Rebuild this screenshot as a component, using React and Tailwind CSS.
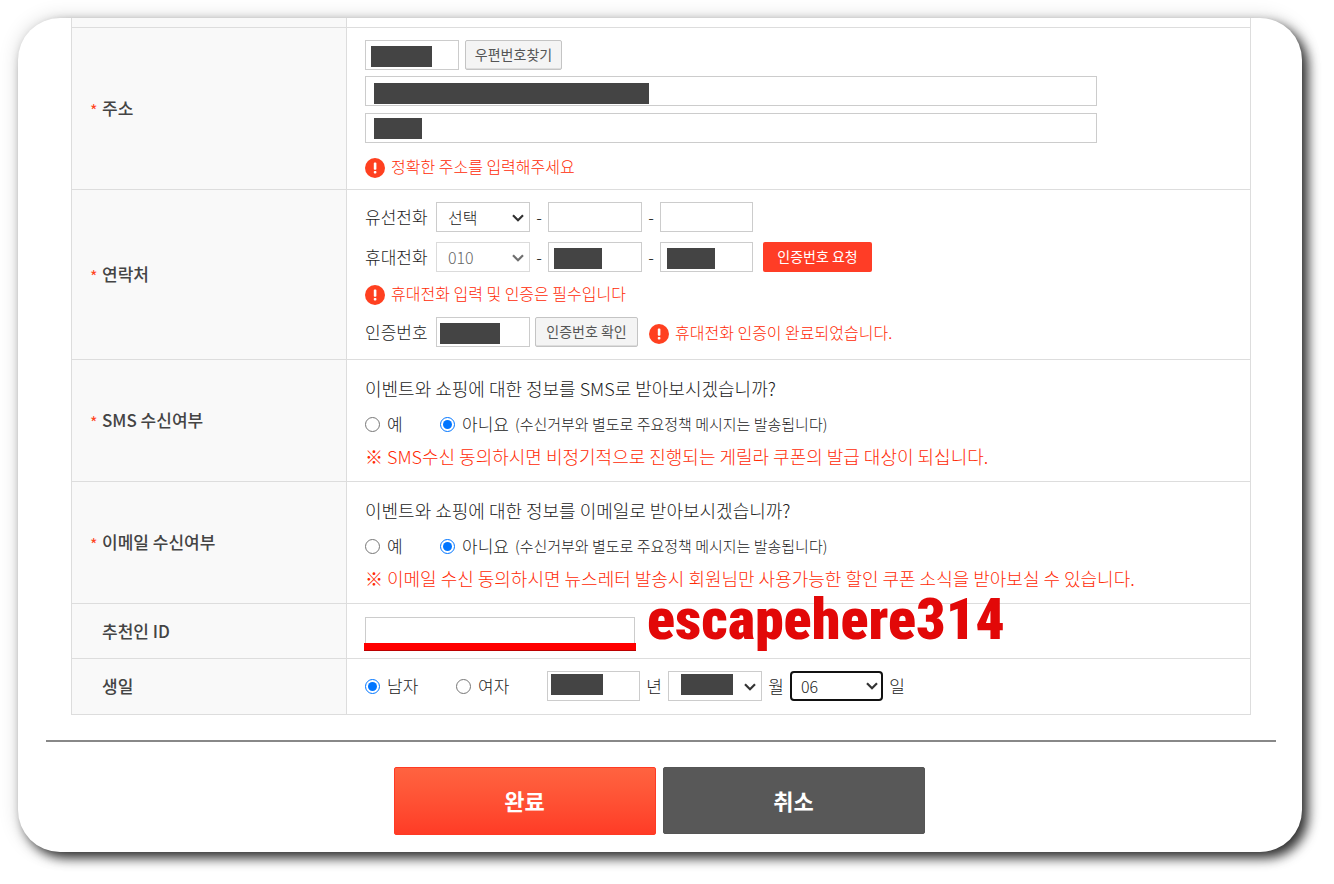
import React, { useState } from "react";

const Bar = ({ className }) => (
  <span className={`absolute h-[21px] bg-[#444] ${className}`} aria-hidden="true" />
);

const Field = ({ label, className, bar, id }) => (
  <div className={`relative h-[30px] ${className}`}>
    <input
      id={id}
      type="text"
      aria-label={label}
      className="block h-full w-full border border-[#ccc] bg-white px-2 outline-none"
    />
    {bar && <Bar className={bar} />}
  </div>
);

const Select = ({ id, label, disabled, option, className, bar }) => (
  <div className={`relative h-[30px] ${disabled ? "opacity-70" : ""} ${className}`}>
    <select
      id={id}
      aria-label={label}
      disabled={disabled}
      className="block h-full w-full appearance-none pr-6 pl-[11px] text-base text-[#222] outline-none"
    >
      <option>{option}</option>
    </select>
    <svg
      viewBox="0 0 12 8"
      className="pointer-events-none absolute top-[11px] right-[5px] h-2 w-3"
      aria-hidden="true"
    >
      <path d="M1 1.2 L6 6.2 L11 1.2" fill="none" stroke="#333" strokeWidth="2.2" />
    </svg>
    {bar && <Bar className={bar} />}
  </div>
);

const Dash = () => <span className="w-[18px] text-center">-</span>;

const AlertIcon = () => (
  <svg viewBox="0 0 20 20" className="mt-1 h-5 w-5 shrink-0" aria-hidden="true">
    <circle cx="10" cy="10" r="10" fill="#ff4020" />
    <rect x="8.8" y="4.6" width="2.6" height="7.2" rx="0.8" fill="#fff" />
    <rect x="8.8" y="13" width="2.6" height="2.6" rx="0.8" fill="#fff" />
  </svg>
);

const Alert = ({ children, className }) => (
  <p
    className={`flex h-[22px] items-center gap-1.5 text-base leading-5 text-[#ff2a05] ${className}`}
  >
    <AlertIcon />
    {children}
  </p>
);

const Row = ({ title, required, cell, children }) => (
  <tr>
    <th
      scope="row"
      className="w-[275px] border border-[#ddd] bg-[#f9f9f9] pl-[18px] text-left text-[17px] font-medium text-[#444]"
    >
      <span className="flex items-center">
        <span className="w-3 pt-1 text-base leading-5 font-normal text-[#ff4422]">
          {required && "*"}
        </span>
        {title}
      </span>
    </th>
    <td className={`border border-[#ddd] px-[18px] ${cell}`}>{children}</td>
  </tr>
);

const Radio = ({ name, label, checked, onChange, className }) => (
  <label className={`flex items-center gap-[7px] ${className}`}>
    <input
      type="radio"
      name={name}
      checked={checked}
      onChange={onChange}
      className="mt-px h-[15px] w-[15px]"
    />
    {label}
  </label>
);

const Consent = ({ name, question, note }) => {
  const [agree, setAgree] = useState(false);

  return (
    <div className="leading-6">
      <p className="text-lg leading-6">{question}</p>
      <div className="mt-3 flex items-center">
        <Radio
          name={name}
          label="예"
          checked={agree}
          onChange={() => setAgree(true)}
          className="w-[75px]"
        />
        <Radio
          name={name}
          label="아니요"
          checked={!agree}
          onChange={() => setAgree(false)}
        />
        <span className="ml-1.5 text-[15px]">
          (수신거부와 별도로 주요정책 메시지는 발송됩니다)
        </span>
      </div>
      <p className="mt-2 text-lg leading-6 text-[#ff2a05]">{note}</p>
    </div>
  );
};

const grayButton =
  "h-[30px] rounded-xs border border-[#c4c4c4] bg-[#f4f4f4] pb-0.5 text-sm font-normal text-[#555] shadow-[inset_0_-1px_0_#ddd]";

const App = () => {
  const [gender, setGender] = useState("male");

  return (
    <div className="min-h-screen bg-white pt-[18px] pr-8 pb-8 pl-[18px] font-['Noto_Sans_CJK_KR',sans-serif] text-[17px] font-light text-[#222]">
      <form
        onSubmit={(e) => e.preventDefault()}
        className="overflow-hidden rounded-[42px] bg-white pb-[17px] shadow-[6px_6px_12px_rgba(0,0,0,0.8),0_0_20px_rgba(0,0,0,0.15)]"
      >
        <div className="pr-[51px] pl-[53px]">
          <table className="w-full table-fixed border-collapse">
            <tbody>
              <tr className="h-[9px]">
                <td className="w-[275px] border border-t-0 border-[#ddd] bg-[#f9f9f9]" />
                <td className="border border-t-0 border-[#ddd]" />
              </tr>

              <Row title="주소" required cell="py-3">
                <div className="flex gap-1.5">
                  <Field
                    label="우편번호"
                    className="w-[94px]"
                    bar="left-1.5 top-1.5 w-[61px]"
                  />
                  <button type="button" className={`w-[97px] ${grayButton}`}>
                    우편번호찾기
                  </button>
                </div>
                <Field
                  label="기본 주소"
                  className="mt-1.5 max-w-[732px]"
                  bar="left-[9px] top-[7px] w-[275px]"
                />
                <Field
                  label="상세 주소"
                  className="mt-[7px] mb-3 max-w-[732px]"
                  bar="left-[9px] top-[5px] w-12"
                />
                <Alert>정확한 주소를 입력해주세요</Alert>
              </Row>

              <Row title="연락처" required cell="py-3">
                <div className="flex items-center">
                  <label htmlFor="tel" className="w-[71px]">
                    유선전화
                  </label>
                  <Select
                    id="tel"
                    option="선택"
                    className="w-[94px] border border-[#ccc]"
                  />
                  <Dash />
                  <Field label="유선전화 가운데 자리" className="w-[94px]" />
                  <Dash />
                  <Field label="유선전화 끝자리" className="w-[93px]" />
                </div>
                <div className="mt-2.5 flex items-center">
                  <label htmlFor="mobile" className="w-[71px]">
                    휴대전화
                  </label>
                  <Select
                    id="mobile"
                    disabled
                    option="010"
                    className="w-[94px] border border-[#ccc]"
                  />
                  <Dash />
                  <Field
                    label="휴대전화 가운데 자리"
                    className="w-[94px]"
                    bar="left-1.5 top-1.5 w-12"
                  />
                  <Dash />
                  <Field
                    label="휴대전화 끝자리"
                    className="w-[93px]"
                    bar="left-[7px] top-1.5 w-12"
                  />
                  <button
                    type="button"
                    className="ml-2.5 h-[30px] w-[109px] rounded-xs bg-[#ff3d26] pb-0.5 text-sm font-normal text-white"
                  >
                    인증번호 요청
                  </button>
                </div>
                <Alert className="mt-2.5 mb-[13px]">
                  휴대전화 입력 및 인증은 필수입니다
                </Alert>
                <div className="flex items-center">
                  <label htmlFor="code" className="w-[71px]">
                    인증번호
                  </label>
                  <Field
                    id="code"
                    className="w-[94px]"
                    bar="left-1 top-1.5 w-[60px]"
                  />
                  <button
                    type="button"
                    className={`mr-[11px] ml-[5px] w-[103px] ${grayButton}`}
                  >
                    인증번호 확인
                  </button>
                  <Alert>휴대전화 인증이 완료되었습니다.</Alert>
                </div>
              </Row>

              <Row title="SMS 수신여부" required cell="pt-4 pb-[13px]">
                <Consent
                  name="sms"
                  question="이벤트와 쇼핑에 대한 정보를 SMS로 받아보시겠습니까?"
                  note="※ SMS수신 동의하시면 비정기적으로 진행되는 게릴라 쿠폰의 발급 대상이 되십니다."
                />
              </Row>

              <Row title="이메일 수신여부" required cell="pt-4 pb-[13px]">
                <Consent
                  name="email"
                  question="이벤트와 쇼핑에 대한 정보를 이메일로 받아보시겠습니까?"
                  note="※ 이메일 수신 동의하시면 뉴스레터 발송시 회원님만 사용가능한 할인 쿠폰 소식을 받아보실 수 있습니다."
                />
              </Row>

              <Row title="추천인 ID" cell="pt-[13px] pb-[11px]">
                <div className="relative w-[270px]">
                  <Field label="추천인 ID" className="w-full" />
                  {/* marker line and callout drawn over the form */}
                  <span className="absolute -inset-x-px top-[26px] h-2 border-b border-[#b00] bg-[#f00]" />
                  <strong className="absolute -top-[26px] left-[282px] font-['Roboto_Condensed','Liberation_Sans_Narrow',sans-serif] text-[58px] leading-[56px] font-black whitespace-nowrap text-[#e20808]">
                    escapehere314
                  </strong>
                </div>
              </Row>

              <Row title="생일" cell="pt-3 pb-[13px]">
                <div className="flex items-center">
                  <Radio
                    name="gender"
                    label="남자"
                    checked={gender === "male"}
                    onChange={() => setGender("male")}
                    className="w-[91px]"
                  />
                  <Radio
                    name="gender"
                    label="여자"
                    checked={gender === "female"}
                    onChange={() => setGender("female")}
                    className="w-[91px]"
                  />
                  <Field
                    label="태어난 해"
                    className="w-[93px]"
                    bar="left-1 top-[3px] w-[52px]"
                  />
                  <span className="w-7 text-center">년</span>
                  <Select
                    label="태어난 달"
                    className="w-[94px] border border-[#ccc]"
                    bar="left-3 top-0.5 w-[52px]"
                  />
                  <span className="w-7 text-center">월</span>
                  <Select
                    label="태어난 날"
                    option="06"
                    className="w-[93px] rounded-sm outline-2 -outline-offset-2 outline-[#111]"
                  />
                  <span className="w-7 text-center">일</span>
                </div>
              </Row>
            </tbody>
          </table>
        </div>

        <hr className="mt-[25px] mr-[26px] ml-7 border-t-2 border-[#888]" />

        <div className="mt-[25px] flex justify-center gap-[7px] pr-0.5 text-[22px] font-bold text-white">
          <button
            type="submit"
            className="h-[68px] w-[262px] rounded-xs border border-[#ff3a24] bg-linear-to-b from-[#ff6340] to-[#ff3b26]"
          >
            완료
          </button>
          <button
            type="button"
            className="h-[67px] w-[262px] rounded-xs border border-[#555] bg-[#585858]"
          >
            취소
          </button>
        </div>
      </form>
    </div>
  );
};

export default App;
